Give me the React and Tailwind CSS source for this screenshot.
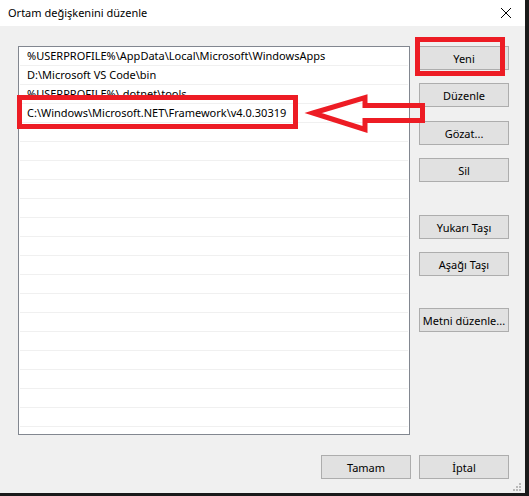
import React from 'react'

const paths = [
  '%USERPROFILE%\\AppData\\Local\\Microsoft\\WindowsApps',
  'D:\\Microsoft VS Code\\bin',
  '%USERPROFILE%\\.dotnet\\tools',
  'C:\\Windows\\Microsoft.NET\\Framework\\v4.0.30319',
]

// boş satırlar listeyi doldursun
const rows = [...paths, ...Array(18).fill('')]

const WinButton = ({ children, className = '' }) => (
  <button
    className={`h-[24px] w-[90px] border border-[#adadad] bg-[#e1e1e1] text-[11px] leading-none text-black whitespace-nowrap ${className}`}
  >
    {children}
  </button>
)

const App = () => {
  return (
    <div
      className="w-[529px] h-[496px] bg-[#1a1a1a]"
      style={{ fontFamily: '"Noto Sans", "Open Sans", sans-serif' }}
    >
      <div className="relative w-[525px] h-[493px] bg-[#f0f0f0] flex flex-col">
        {/* başlık çubuğu */}
        <div className="h-[26px] bg-white flex items-center justify-between pl-[8px] pr-[12px]">
          <span className="text-[11px] text-black">Ortam değişkenini düzenle</span>
          <svg width="12" height="12" viewBox="0 0 12 12" className="mr-[1px]">
            <path d="M1 1 L11 11 M11 1 L1 11" stroke="#000" strokeWidth="1" />
          </svg>
        </div>

        <div className="flex pt-[20px] pl-[18px]">
          {/* yol listesi */}
          <div className="w-[392px] h-[389px] border border-[#828790] bg-white overflow-hidden">
            {rows.map((p, i) => (
              <div
                key={i}
                className="h-[19px] mx-[1px] border-b border-[#f0f0f0] flex items-center pl-[7px] text-[11px] text-black whitespace-nowrap"
              >
                {p}
              </div>
            ))}
          </div>

          {/* sağ taraftaki düğmeler */}
          <div className="ml-[9px] flex flex-col">
            <WinButton>Yeni</WinButton>
            <WinButton className="mt-[13px]">Düzenle</WinButton>
            <WinButton className="mt-[14px]">Gözat...</WinButton>
            <WinButton className="mt-[13px]">Sil</WinButton>
            <WinButton className="mt-[33px]">Yukarı Taşı</WinButton>
            <WinButton className="mt-[13px]">Aşağı Taşı</WinButton>
            <WinButton className="mt-[32px]">Metni düzenle...</WinButton>
          </div>
        </div>

        <div className="flex justify-end gap-[8px] pr-[16px] mt-[20px]">
          <WinButton>Tamam</WinButton>
          <WinButton>İptal</WinButton>
        </div>

        {/* boyutlandırma tutamacı */}
        <svg className="absolute right-[3px] bottom-[1px]" width="10" height="10" viewBox="0 0 10 10">
          <rect x="7" y="1" width="2" height="2" fill="#b9b9b9" />
          <rect x="4" y="4" width="2" height="2" fill="#b9b9b9" />
          <rect x="7" y="4" width="2" height="2" fill="#b9b9b9" />
          <rect x="1" y="7" width="2" height="2" fill="#b9b9b9" />
          <rect x="4" y="7" width="2" height="2" fill="#b9b9b9" />
          <rect x="7" y="7" width="2" height="2" fill="#b9b9b9" />
        </svg>

        {/* kırmızı işaretler */}
        <svg className="absolute left-0 top-0 pointer-events-none" width="525" height="493">
          <rect x="19.5" y="97.5" width="276" height="29" fill="none" stroke="#ed1c24" strokeWidth="5" />
          <rect x="417.5" y="39.5" width="85" height="34" fill="none" stroke="#ed1c24" strokeWidth="5" />
          <polygon
            points="313,113 365,97.5 365,105.5 422.5,105.5 422.5,120.5 365,120.5 365,129.5"
            fill="none"
            stroke="#ed1c24"
            strokeWidth="5"
            strokeLinejoin="miter"
          />
        </svg>
      </div>
    </div>
  )
}

export default App
